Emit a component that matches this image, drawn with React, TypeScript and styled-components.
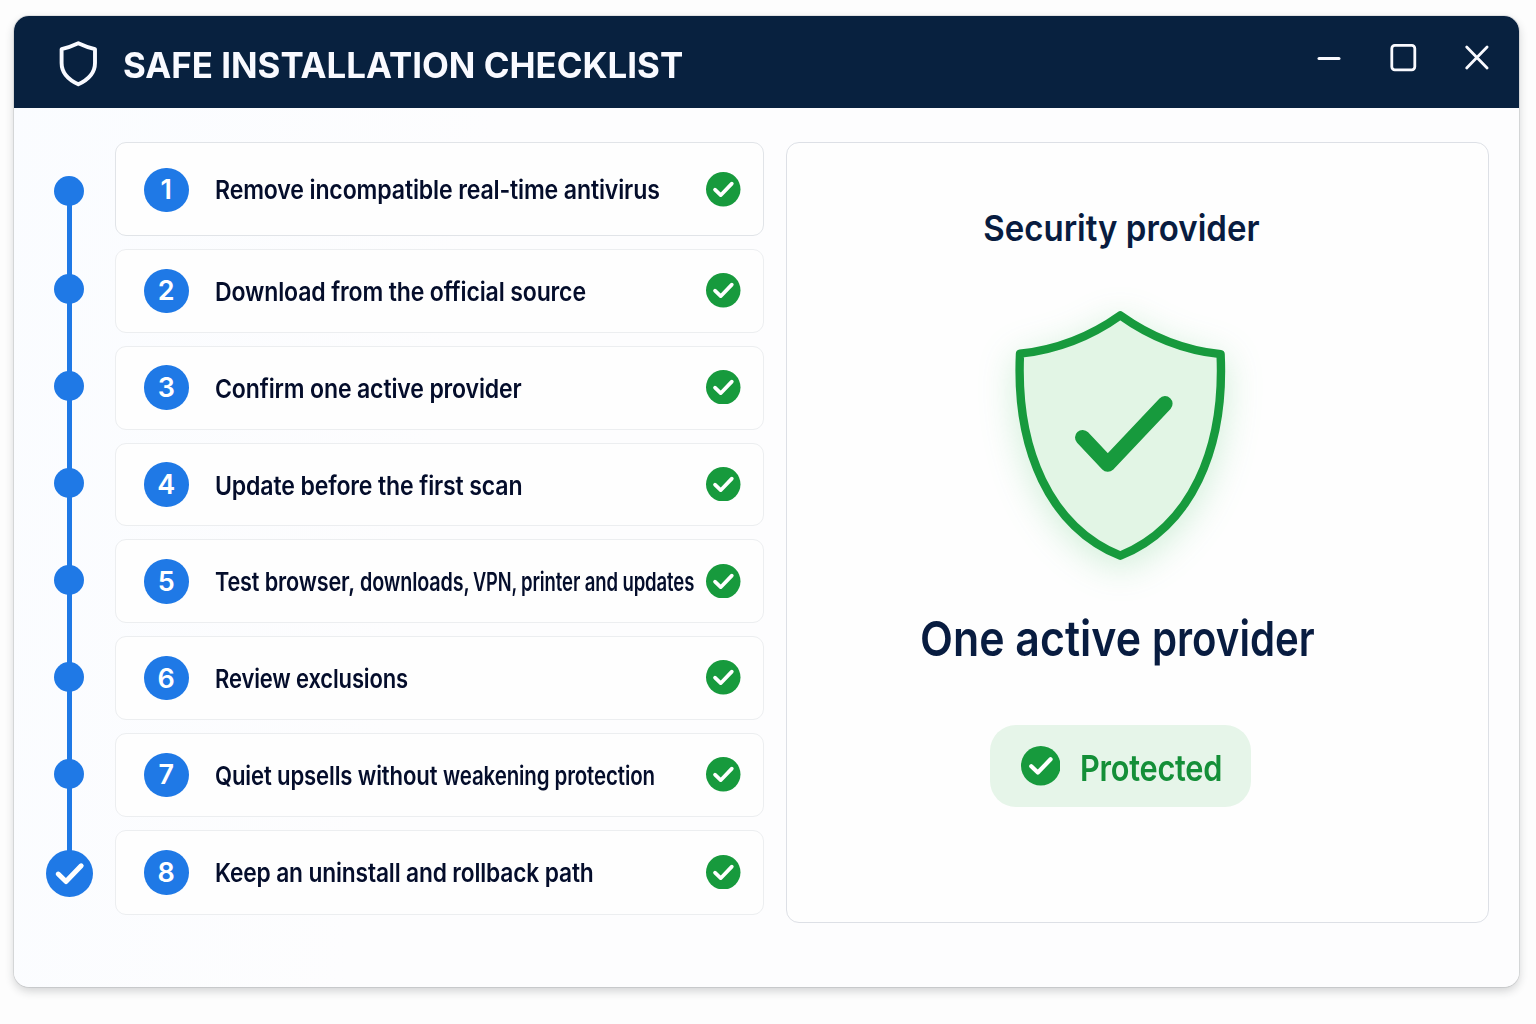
import { Fragment } from "react";
import styled, { createGlobalStyle } from "styled-components";

const GlobalStyle = createGlobalStyle`
  * {
    box-sizing: border-box;
  }

  body {
    margin: 0;
    background: #fdfdfd;
    font-family: Inter, "Liberation Sans", sans-serif;
    -webkit-font-smoothing: antialiased;
  }
`;

const Page = styled.div`
  height: 1024px;
  padding: 16px 17.5px 37px 14px;
  overflow: hidden;
`;

const Window = styled.main`
  height: 971px;
  display: flex;
  flex-direction: column;
  overflow: hidden;
  border-radius: 15px;
  background: linear-gradient(100deg, #fafcff 0%, #fdfdfe 30%, #fdfdfe 100%);
  box-shadow:
    0 0 0 1px rgba(40, 50, 60, 0.1),
    0 4px 10px rgba(30, 35, 40, 0.2);
`;

const TitleBar = styled.header`
  flex: none;
  height: 92px;
  display: flex;
  align-items: center;
  justify-content: space-between;
  padding: 0 28px 0 43px;
  background: #08213f;
  color: #f9faff;
`;

const Brand = styled.div`
  display: flex;
  align-items: center;
  gap: 23px;
  padding-top: 4px;
`;

const Title = styled.h1`
  margin: 3px 0 0;
  font-size: 35.5px;
  line-height: 44px;
  font-weight: 700;
  white-space: nowrap;
  transform: scaleX(0.982);
  transform-origin: 0 50%;
`;

const WindowControls = styled.div`
  display: flex;
  align-items: center;
  gap: 46px;
  padding-bottom: 9px;
`;

const Content = styled.div`
  display: flex;
  align-items: flex-start;
  padding: 34px 30px 0 31.5px;
`;

const Timeline = styled.div`
  flex: none;
  width: 47px;
  margin: 34px 22.5px 0 0;
  display: flex;
  flex-direction: column;
  align-items: center;
`;

const Dot = styled.span`
  width: 30px;
  height: 30px;
  border-radius: 50%;
  background: #1f79e6;
`;

const Segment = styled.span<{ $height: number }>`
  width: 5px;
  height: ${({ $height }) => $height + 2}px;
  margin: -1px 0;
  background: #1f79e6;
`;

const StepList = styled.ol`
  flex: none;
  width: 649px;
  margin: 0 22px 0 0;
  padding: 0;
  display: flex;
  flex-direction: column;
  gap: 13px;
  list-style: none;
`;

const Step = styled.li<{ $height: number; $first?: boolean }>`
  height: ${({ $height }) => $height}px;
  display: flex;
  align-items: center;
  padding: ${({ $first }) => ($first ? "1.5px" : 0)} 22.5px 0 28px;
  border: 1px solid ${({ $first }) => ($first ? "#e1e4e8" : "#eceef0")};
  border-radius: 11px;
  background: #fefefe;
`;

const StepNumber = styled.span`
  flex: none;
  width: 44.5px;
  height: 44.5px;
  display: flex;
  align-items: center;
  justify-content: center;
  margin-right: 26.3px;
  border-radius: 50%;
  background: #1f79e6;
  color: #fff;
  font-size: 27px;
  font-weight: 600;
`;

const StepLabel = styled.div<{ $first?: boolean }>`
  flex: 1;
  min-width: 0;
  display: flex;
  padding-top: ${({ $first }) => ($first ? 0 : 2.2)}px;
  color: #040d2b;
  font-size: 26px;
  line-height: 32px;
  font-weight: 600;
  letter-spacing: -0.17px;
`;

const StepCheck = styled.span`
  flex: none;
  margin-bottom: 1px;
`;

const Run = styled.span<{ $scale: number; $width?: number }>`
  flex: none;
  width: ${({ $width }) => ($width ? `${$width}px` : "auto")};
  white-space: nowrap;
  transform: scaleX(${({ $scale }) => $scale});
  transform-origin: 0 50%;
`;

const Panel = styled.section`
  flex: none;
  width: 703px;
  height: 781px;
  display: flex;
  flex-direction: column;
  align-items: center;
  padding: 64px 35px 0 0;
  border: 1px solid #dde0e6;
  border-radius: 13px;
  background: #fefefe;
`;

const PanelTitle = styled.h2`
  margin: 0;
  color: #081c40;
  font-size: 35.5px;
  line-height: 44px;
  font-weight: 600;
  white-space: nowrap;
  transform: translateX(1.8px) scaleX(0.93);
`;

const Shield = styled.svg`
  margin-top: 49px;
  overflow: visible;
  filter: drop-shadow(0 8px 18px rgba(60, 190, 90, 0.24));
`;

const Status = styled.p`
  width: 401px;
  margin: 39px 0 0;
  display: flex;
  color: #081c40;
  font-size: 48.5px;
  line-height: 60px;
  font-weight: 600;
`;

const Badge = styled.div`
  width: 261px;
  height: 82px;
  display: flex;
  align-items: center;
  margin-top: 56px;
  padding-left: 31px;
  border-radius: 26px;
  background: #e6f5e9;
`;

const BadgeText = styled.span`
  margin-left: 19.5px;
  padding-top: 3px;
  color: #148f38;
  font-size: 36px;
  line-height: 44px;
  font-weight: 600;
  letter-spacing: -0.3px;
  transform: scaleX(0.853);
  transform-origin: 0 50%;
`;

const Icon = styled.svg`
  flex: none;
  display: block;
`;

const BLUE = "#1f79e6";
const GREEN = "#179a3d";

function CheckCircle({ size, color }: { size: number; color: string }) {
  return (
    <Icon width={size} height={size} viewBox="-17.5 -17.5 35 35">
      <circle r="17.5" fill={color} />
      <path
        d="M-8.4 .4 -2.6 6 8.7 -5.7"
        fill="none"
        stroke="#fff"
        strokeWidth="3.7"
        strokeLinecap="round"
        strokeLinejoin="round"
      />
    </Icon>
  );
}

type TextRun = { text: string; scale: number; width?: number };

const steps: { height: number; runs: TextRun[] }[] = [
  { height: 94, runs: [{ text: "Remove incompatible real-time antivirus", scale: 0.889 }] },
  { height: 83.8, runs: [{ text: "Download from the official source", scale: 0.887 }] },
  { height: 83.8, runs: [{ text: "Confirm one active provider", scale: 0.887 }] },
  { height: 83.8, runs: [{ text: "Update before the first scan", scale: 0.888 }] },
  {
    height: 83.8,
    runs: [
      { text: "Test browser,", scale: 0.832, width: 144.8 },
      { text: "downloads,", scale: 0.76, width: 113 },
      { text: "VPN,", scale: 0.7, width: 48.3 },
      { text: "printer and updates", scale: 0.713, width: 173 },
    ],
  },
  { height: 83.8, runs: [{ text: "Review exclusions", scale: 0.846 }] },
  {
    height: 83.8,
    runs: [
      { text: "Quiet upsells without", scale: 0.851, width: 228.2 },
      { text: "weakening protection", scale: 0.789, width: 212 },
    ],
  },
  { height: 85, runs: [{ text: "Keep an uninstall and rollback path", scale: 0.875 }] },
];

const status: TextRun[] = [
  { text: "One active", scale: 0.884, width: 232.8 },
  { text: "provider", scale: 0.828 },
];

const segments = [68, 67, 67, 67, 67, 67, 60.5];

function App() {
  return (
    <>
      <GlobalStyle />
      <Page>
        <Window>
          <TitleBar>
            <Brand>
              <Icon width="43" height="50" viewBox="57 39 43 50">
                <path
                  d="M78.3 43.2C83.5 45.6 89 47.8 95 49.2V63C95 72 88.5 79.6 78.3 84.3 68.1 79.6 61.6 72 61.6 63V49.2C67.6 47.8 73.1 45.6 78.3 43.2Z"
                  fill="none"
                  stroke="currentColor"
                  strokeWidth="3.9"
                  strokeLinejoin="round"
                />
              </Icon>
              <Title>SAFE INSTALLATION CHECKLIST</Title>
            </Brand>
            <WindowControls>
              <Icon width="28" height="28" viewBox="0 0 28 28">
                <path d="M4 14.5H24" stroke="currentColor" strokeWidth="3" strokeLinecap="round" />
              </Icon>
              <Icon width="28" height="28" viewBox="0 0 28 28">
                <rect
                  x="2.8"
                  y="1.4"
                  width="23"
                  height="24.4"
                  rx="3"
                  fill="none"
                  stroke="currentColor"
                  strokeWidth="2.8"
                />
              </Icon>
              <Icon width="28" height="28" viewBox="0 0 28 28">
                <path
                  d="M3.7 3 24.1 24M24.1 3 3.7 24"
                  stroke="currentColor"
                  strokeWidth="2.8"
                  strokeLinecap="round"
                />
              </Icon>
            </WindowControls>
          </TitleBar>
          <Content>
            <Timeline>
              {segments.map((height, i) => (
                <Fragment key={i}>
                  <Dot />
                  <Segment $height={height} />
                </Fragment>
              ))}
              <CheckCircle size={47} color={BLUE} />
            </Timeline>
            <StepList>
              {steps.map(({ height, runs }, i) => (
                <Step key={i} $height={height} $first={i === 0}>
                  <StepNumber>{i + 1}</StepNumber>
                  <StepLabel $first={i === 0}>
                    {runs.map(({ text, scale, width }) => (
                      <Run key={text} $scale={scale} $width={width}>
                        {text}
                      </Run>
                    ))}
                  </StepLabel>
                  <StepCheck>
                    <CheckCircle size={34.5} color={GREEN} />
                  </StepCheck>
                </Step>
              ))}
            </StepList>
            <Panel>
              <PanelTitle>Security provider</PanelTitle>
              <Shield width="240" height="270" viewBox="1000 300 240 270">
                <path
                  d="M1120.3 315.3C1092 335.5 1058 349.5 1020 353.7 1015.5 450 1050 527 1120.3 555.7 1190.6 527 1225 450 1220.6 354.2 1182.5 350 1148.5 335.5 1120.3 315.3Z"
                  fill="#e2f5e5"
                  stroke={GREEN}
                  strokeWidth="8.4"
                  strokeLinejoin="round"
                />
                <path
                  d="M1082.6 437.5 1107.8 464.2 1165 403.7"
                  fill="none"
                  stroke={GREEN}
                  strokeWidth="15.2"
                  strokeLinecap="round"
                  strokeLinejoin="round"
                />
              </Shield>
              <Status>
                {status.map(({ text, scale, width }) => (
                  <Run key={text} $scale={scale} $width={width}>
                    {text}
                  </Run>
                ))}
              </Status>
              <Badge>
                <CheckCircle size={39.5} color={GREEN} />
                <BadgeText>Protected</BadgeText>
              </Badge>
            </Panel>
          </Content>
        </Window>
      </Page>
    </>
  );
}

export default App;
